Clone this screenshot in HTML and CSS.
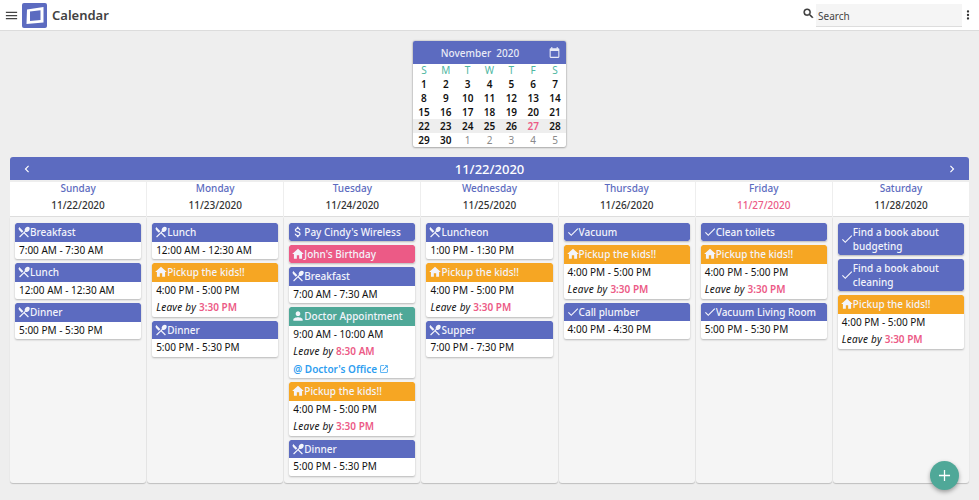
FILE: index.html
```html
<!DOCTYPE html>
<html lang="en">
<head>
<meta charset="utf-8">
<title>Calendar</title>
<link rel="stylesheet" href="styles.css">
</head>
<body>
<svg class="defs" width="0" height="0" aria-hidden="true">
  <symbol id="food" viewBox="0 0 24 24"><path d="M8.1 13.34l2.83-2.83L3.91 3.5a4 4 0 0 0 0 5.66l4.19 4.18zm6.78-1.81c1.53.71 3.68.21 5.27-1.38 1.91-1.91 2.28-4.65.81-6.12-1.46-1.46-4.2-1.1-6.12.81-1.59 1.59-2.09 3.74-1.38 5.27L3.7 19.87l1.41 1.41L12 14.41l6.88 6.88 1.41-1.41L13.41 13l1.47-1.47z"/></symbol>
  <symbol id="home" viewBox="0 0 24 24"><path d="M10 20v-6h4v6h5v-8h3L12 3 2 12h3v8z"/></symbol>
  <symbol id="check" viewBox="0 0 24 24"><path d="M9 16.17 4.83 12l-1.42 1.41L9 19 21 7l-1.41-1.41z"/></symbol>
  <symbol id="person" viewBox="0 0 24 24"><path d="M12 12c2.21 0 4-1.79 4-4s-1.79-4-4-4-4 1.79-4 4 1.79 4 4 4zm0 2c-2.67 0-8 1.34-8 4v2h16v-2c0-2.66-5.33-4-8-4z"/></symbol>
  <symbol id="money" viewBox="0 0 24 24"><path d="M11.8 10.9c-2.27-.59-3-1.2-3-2.15 0-1.09 1.01-1.85 2.7-1.85 1.78 0 2.44.85 2.5 2.1h2.21c-.07-1.72-1.12-3.3-3.21-3.81V3h-3v2.16c-1.94.42-3.5 1.68-3.5 3.61 0 2.31 1.91 3.46 4.7 4.13 2.5.6 3 1.48 3 2.41 0 .69-.49 1.79-2.7 1.79-2.06 0-2.87-.92-2.98-2.1h-2.2c.12 2.19 1.76 3.42 3.68 3.83V21h3v-2.15c1.95-.37 3.5-1.5 3.5-3.55 0-2.84-2.43-3.81-4.7-4.4z"/></symbol>
  <symbol id="open" viewBox="0 0 24 24"><path d="M19 19H5V5h7V3H5a2 2 0 0 0-2 2v14a2 2 0 0 0 2 2h14c1.1 0 2-.9 2-2v-7h-2v7zM14 3v2h3.59l-9.83 9.83 1.41 1.41L19 6.41V10h2V3h-7z"/></symbol>
</svg>

<header class="topbar">
  <svg class="menu-icon" viewBox="0 0 24 24"><path d="M3 18h18v-2H3v2zm0-5h18v-2H3v2zm0-7v2h18V6H3z"/></svg>
  <span class="logo">
    <svg viewBox="0 0 25 25"><path class="logo-frame" fill-rule="evenodd" d="M5 6.5 21.5 4V19.5L4.5 21zM8 8.5 8 18 18.5 17V7.2z"/></svg>
  </span>
  <h1 class="title">Calendar</h1>
  <div class="spacer"></div>
  <svg class="search-icon" viewBox="0 0 24 24"><path d="M15.5 14h-.79l-.28-.27A6.47 6.47 0 0 0 16 9.5 6.5 6.5 0 1 0 9.5 16c1.61 0 3.09-.59 4.23-1.57l.27.28v.79l5 4.99L20.49 19l-4.99-5zm-6 0C7.01 14 5 11.99 5 9.5S7.01 5 9.5 5 14 7.01 14 9.5 11.99 14 9.5 14z"/></svg>
  <div class="search">Search</div>
  <svg class="more-icon" viewBox="0 0 24 24"><path d="M12 8a2 2 0 1 0 0-4 2 2 0 0 0 0 4zm0 2a2 2 0 1 0 0 4 2 2 0 0 0 0-4zm0 6a2 2 0 1 0 0 4 2 2 0 0 0 0-4z"/></svg>
</header>

<main class="page">
  <section class="mini">
    <div class="mini-head">
      <span class="mini-title">November&nbsp; 2020</span>
      <svg class="mini-cal-icon" viewBox="0 0 24 24"><path d="M19 4h-1V2h-2v2H8V2H6v2H5a2 2 0 0 0-2 2v14a2 2 0 0 0 2 2h14a2 2 0 0 0 2-2V6a2 2 0 0 0-2-2zm0 16H5V9h14v11z"/></svg>
    </div>
    <div class="mini-grid dow"><span>S</span><span>M</span><span>T</span><span>W</span><span>T</span><span>F</span><span>S</span></div>
    <div class="mini-grid"><span>1</span><span>2</span><span>3</span><span>4</span><span>5</span><span>6</span><span>7</span></div>
    <div class="mini-grid"><span>8</span><span>9</span><span>10</span><span>11</span><span>12</span><span>13</span><span>14</span></div>
    <div class="mini-grid"><span>15</span><span>16</span><span>17</span><span>18</span><span>19</span><span>20</span><span>21</span></div>
    <div class="mini-grid current"><span>22</span><span>23</span><span>24</span><span>25</span><span>26</span><span class="today">27</span><span>28</span></div>
    <div class="mini-grid"><span>29</span><span>30</span><span class="other">1</span><span class="other">2</span><span class="other">3</span><span class="other">4</span><span class="other">5</span></div>
  </section>

  <section class="week">
    <div class="week-bar">
      <svg class="chev" viewBox="0 0 24 24"><path d="M15.41 7.41 14 6l-6 6 6 6 1.41-1.41L10.83 12z"/></svg>
      <span class="week-title">11/22/2020</span>
      <svg class="chev" viewBox="0 0 24 24"><path d="M10 6 8.59 7.41 13.17 12l-4.58 4.59L10 18l6-6z"/></svg>
    </div>
    <div class="days">
      <div class="day">
        <div class="day-head"><div class="dname">Sunday</div><div class="ddate">11/22/2020</div></div>
        <div class="day-body">
          <article class="ev"><div class="ev-t blue"><svg class="i"><use href="#food"/></svg>Breakfast</div><div class="ev-b"><div>7:00 AM - 7:30 AM</div></div></article>
          <article class="ev"><div class="ev-t blue"><svg class="i"><use href="#food"/></svg>Lunch</div><div class="ev-b"><div>12:00 AM - 12:30 AM</div></div></article>
          <article class="ev"><div class="ev-t blue"><svg class="i"><use href="#food"/></svg>Dinner</div><div class="ev-b"><div>5:00 PM - 5:30 PM</div></div></article>
        </div>
      </div>
      <div class="day">
        <div class="day-head"><div class="dname">Monday</div><div class="ddate">11/23/2020</div></div>
        <div class="day-body">
          <article class="ev"><div class="ev-t blue"><svg class="i"><use href="#food"/></svg>Lunch</div><div class="ev-b"><div>12:00 AM - 12:30 AM</div></div></article>
          <article class="ev"><div class="ev-t orange"><svg class="i"><use href="#home"/></svg>Pickup the kids!!</div><div class="ev-b"><div>4:00 PM - 5:00 PM</div><div class="leave">Leave by <b>3:30 PM</b></div></div></article>
          <article class="ev"><div class="ev-t blue"><svg class="i"><use href="#food"/></svg>Dinner</div><div class="ev-b"><div>5:00 PM - 5:30 PM</div></div></article>
        </div>
      </div>
      <div class="day">
        <div class="day-head"><div class="dname">Tuesday</div><div class="ddate">11/24/2020</div></div>
        <div class="day-body">
          <article class="ev"><div class="ev-t blue solo"><svg class="i"><use href="#money"/></svg>Pay Cindy's Wireless</div></article>
          <article class="ev"><div class="ev-t pink solo"><svg class="i"><use href="#home"/></svg>John's Birthday</div></article>
          <article class="ev"><div class="ev-t blue"><svg class="i"><use href="#food"/></svg>Breakfast</div><div class="ev-b"><div>7:00 AM - 7:30 AM</div></div></article>
          <article class="ev"><div class="ev-t green"><svg class="i"><use href="#person"/></svg>Doctor Appointment</div><div class="ev-b"><div>9:00 AM - 10:00 AM</div><div class="leave">Leave by <b>8:30 AM</b></div><div class="place">@ Doctor's Office <svg class="ext"><use href="#open"/></svg></div></div></article>
          <article class="ev"><div class="ev-t orange"><svg class="i"><use href="#home"/></svg>Pickup the kids!!</div><div class="ev-b"><div>4:00 PM - 5:00 PM</div><div class="leave">Leave by <b>3:30 PM</b></div></div></article>
          <article class="ev"><div class="ev-t blue"><svg class="i"><use href="#food"/></svg>Dinner</div><div class="ev-b"><div>5:00 PM - 5:30 PM</div></div></article>
        </div>
      </div>
      <div class="day">
        <div class="day-head"><div class="dname">Wednesday</div><div class="ddate">11/25/2020</div></div>
        <div class="day-body">
          <article class="ev"><div class="ev-t blue"><svg class="i"><use href="#food"/></svg>Luncheon</div><div class="ev-b"><div>1:00 PM - 1:30 PM</div></div></article>
          <article class="ev"><div class="ev-t orange"><svg class="i"><use href="#home"/></svg>Pickup the kids!!</div><div class="ev-b"><div>4:00 PM - 5:00 PM</div><div class="leave">Leave by <b>3:30 PM</b></div></div></article>
          <article class="ev"><div class="ev-t blue"><svg class="i"><use href="#food"/></svg>Supper</div><div class="ev-b"><div>7:00 PM - 7:30 PM</div></div></article>
        </div>
      </div>
      <div class="day">
        <div class="day-head"><div class="dname">Thursday</div><div class="ddate">11/26/2020</div></div>
        <div class="day-body">
          <article class="ev"><div class="ev-t blue solo"><svg class="i"><use href="#check"/></svg>Vacuum</div></article>
          <article class="ev"><div class="ev-t orange"><svg class="i"><use href="#home"/></svg>Pickup the kids!!</div><div class="ev-b"><div>4:00 PM - 5:00 PM</div><div class="leave">Leave by <b>3:30 PM</b></div></div></article>
          <article class="ev"><div class="ev-t blue"><svg class="i"><use href="#check"/></svg>Call plumber</div><div class="ev-b"><div>4:00 PM - 4:30 PM</div></div></article>
        </div>
      </div>
      <div class="day">
        <div class="day-head"><div class="dname">Friday</div><div class="ddate red">11/27/2020</div></div>
        <div class="day-body">
          <article class="ev"><div class="ev-t blue solo"><svg class="i"><use href="#check"/></svg>Clean toilets</div></article>
          <article class="ev"><div class="ev-t orange"><svg class="i"><use href="#home"/></svg>Pickup the kids!!</div><div class="ev-b"><div>4:00 PM - 5:00 PM</div><div class="leave">Leave by <b>3:30 PM</b></div></div></article>
          <article class="ev"><div class="ev-t blue"><svg class="i"><use href="#check"/></svg>Vacuum Living Room</div><div class="ev-b"><div>5:00 PM - 5:30 PM</div></div></article>
        </div>
      </div>
      <div class="day">
        <div class="day-head"><div class="dname">Saturday</div><div class="ddate">11/28/2020</div></div>
        <div class="day-body">
          <article class="ev"><div class="ev-t blue solo"><svg class="i"><use href="#check"/></svg><span>Find a book about budgeting</span></div></article>
          <article class="ev"><div class="ev-t blue solo"><svg class="i"><use href="#check"/></svg><span>Find a book about cleaning</span></div></article>
          <article class="ev"><div class="ev-t orange"><svg class="i"><use href="#home"/></svg>Pickup the kids!!</div><div class="ev-b"><div>4:00 PM - 5:00 PM</div><div class="leave">Leave by <b>3:30 PM</b></div></div></article>
        </div>
      </div>
    </div>
  </section>
</main>

<button class="fab" aria-label="Add"><svg viewBox="0 0 24 24"><path d="M19 12.8h-6.2V19h-1.6v-6.2H5v-1.6h6.2V5h1.6v6.2H19z"/></svg></button>
</body>
</html>
```

FILE: styles.css
```css
* { box-sizing: border-box; }
html, body { margin: 0; height: 100%; }
body {
  background: #eeeeee;
  font-family: "Noto Sans", "Open Sans", sans-serif;
  font-size: 10px;
  color: #111;
  overflow: hidden;
  position: relative;
}
.defs { position: absolute; }
.topbar {
  height: 31px;
  background: #fff;
  border-bottom: 1px solid #dcdcdc;
  display: flex;
  align-items: center;
  padding: 0 4px;
}
.menu-icon { width: 15px; height: 15px; fill: #444; margin-right: 3px; flex: none; }
.logo { width: 25px; height: 25px; background: #5c6bc0; border-radius: 2px; display: block; margin-top: 1px; }
.logo svg { width: 25px; height: 25px; display: block; }
.logo-frame { fill: #fff; }
.title { margin: 0 0 0 5px; font-size: 13px; font-weight: 600; color: #424242; }
.spacer { flex: 1; }
.search-icon { width: 13px; height: 13px; fill: #333; margin-right: 1px; margin-top: -3px; stroke: #333; stroke-width: 0.8; }
.search {
  width: 146px; height: 23px; background: #f5f5f5; border-bottom: 1px solid #ddd;
  padding: 4px 2px 0; font-size: 10px; color: #444; line-height: 16px; margin-top: 1px;
}
.more-icon { width: 14px; height: 14px; fill: #333; margin-left: -1px; margin-top: -1px; }

.page { padding: 10px 10px 0; display: flex; flex-direction: column; align-items: center; }

.mini {
  width: 153px; height: 106px; background: #fff; border-radius: 2px;
  box-shadow: 0 0 2px rgba(0,0,0,.35), 0 1px 2px rgba(0,0,0,.2);
  overflow: hidden;
}
.mini-head {
  height: 23px; background: #5c6bc0; color: #e8eaf6; display: flex; align-items: center;
  justify-content: center; position: relative; font-size: 10px; font-weight: 500;
  padding-right: 19px;
}
.mini-cal-icon { position: absolute; right: 5px; top: 5px; width: 13px; height: 13px; fill: #e8eaf6; }
.mini-grid { display: grid; grid-template-columns: repeat(7, 1fr); height: 14px; line-height: 14px; text-align: center; font-weight: 600; color: #111; }
.mini-grid.dow { font-weight: 400; color: #4db6a0; height: 13px; line-height: 13px; }
.mini-grid.current { background: #eeeeee; }
.today { color: #ec5a86; }
.other { color: #8a8a8a; font-weight: 400; }

.week { width: 100%; margin-top: 10px; }
.week-bar {
  height: 23px; background: #5c6bc0; border-radius: 3px 3px 0 0; color: #fff;
  display: flex; align-items: center; justify-content: space-between; padding: 0 10px;
}
.week-title { font-size: 13px; font-weight: 500; }
.chev { width: 14px; height: 14px; fill: #fff; }
.days { display: grid; grid-template-columns: repeat(7, 1fr); gap: 1px; margin-top: 2px; }
.day { display: flex; flex-direction: column; height: 301px; }
.day-head { background: #fff; height: 35px; text-align: center; border-bottom: 1px solid #ddd; }
.dname { color: #5c6bc0; font-weight: 500; line-height: 13px; }
.ddate { line-height: 20px; font-weight: 500; color: #333; }
.ddate.red { color: #ec5a86; }
.day-body {
  flex: 1; background: #f5f5f5; padding: 6px 5px; display: flex; flex-direction: column; gap: 4px;
  border-radius: 0 0 3px 3px; box-shadow: 0 1px 1px rgba(0,0,0,.2);
}
.ev { background: #fff; border-radius: 2px; box-shadow: 0 1px 2px rgba(0,0,0,.25); overflow: hidden; }
.ev-t {
  min-height: 18.5px; color: #f3f4fb; font-weight: 500; line-height: 14px;
  display: flex; align-items: center; padding: 2px 3px 2px 2px; border-radius: 2px 2px 0 0;
}
.ev-t.solo { min-height: 18px; border-radius: 2px; }
.blue { background: #5c6bc0; }
.orange { background: #f6a623; }
.pink { background: #ec5a86; }
.green { background: #4fa898; }
.i { width: 14px; height: 14px; flex: none; fill: #f3f4fb; margin-right: -1px; }
.ev-b > div { height: 17.5px; line-height: 17.5px; padding-left: 4px; color: #111; }
.ev-b > .leave { font-style: italic; letter-spacing: 0.25px; }
.leave b { font-style: normal; color: #ec5a86; font-weight: 600; letter-spacing: 0; }
.ev-b > .place { color: #2f9ef0; font-weight: 600; display: flex; align-items: center; gap: 2px; }
.ext { width: 10px; height: 10px; fill: #2f9ef0; }

.fab {
  position: absolute; left: 930px; top: 461px; width: 29px; height: 29px; border-radius: 50%; border: 0;
  background: #4fa898; padding: 0; display: flex; align-items: center; justify-content: center;
  box-shadow: 0 2px 4px rgba(0,0,0,.35);
}
.fab svg { width: 19px; height: 19px; fill: #fff; }
```
